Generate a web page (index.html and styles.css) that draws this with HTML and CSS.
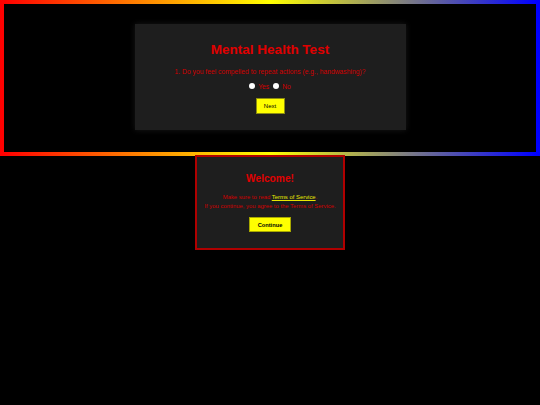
FILE: index.html
```html
<!DOCTYPE html>
<html lang="en">
<head>
<meta charset="utf-8">
<title>Mental Health Test</title>
<link rel="stylesheet" href="styles.css">
</head>
<body>
  <div class="frame">
    <div class="card">
      <h1 class="title">Mental Health Test</h1>
      <p class="question">1. Do you feel compelled to repeat actions (e.g., handwashing)?</p>
      <div class="options">
        <label class="option"><input type="radio" name="q1" class="radio"><span>Yes</span></label>
        <label class="option"><input type="radio" name="q1" class="radio"><span>No</span></label>
      </div>
      <button class="btn btn-next">Next</button>
    </div>
  </div>

  <div class="modal">
    <h2 class="modal-title">Welcome!</h2>
    <p class="modal-text">Make sure to read <a href="#" class="tos-link">Terms of Service</a>.<br>If you continue, you agree to the Terms of Service.</p>
    <button class="btn btn-continue">Continue</button>
  </div>
</body>
</html>
```

FILE: styles.css
```css
* { box-sizing: border-box; }

html, body {
  margin: 0;
  padding: 0;
  background: #000;
  font-family: "Liberation Sans", Arial, sans-serif;
  color: #e00000;
}

.frame {
  height: 156px;
  padding: 20px 0 0;
  border: 4px solid;
  border-image: linear-gradient(to right, #ff0000, #ffff00, #0000ff) 1;
}

.card {
  width: 271px;
  margin: 0 auto;
  padding: 11px 11px 16px;
  background: #1e1e1e;
  box-shadow: 0 0 6px rgba(40, 40, 40, 0.6);
  text-align: center;
  display: flex;
  flex-direction: column;
  align-items: center;
}

.title {
  margin: 7px 0 0;
  font-size: 13.5px;
  line-height: 16px;
  font-weight: bold;
  color: #e00000;
}

.question {
  margin: 10px 0 0;
  font-size: 6.75px;
  line-height: 8px;
  color: #d00000;
}

.options {
  margin-top: 5px;
  height: 10px;
  display: flex;
  align-items: center;
  gap: 4px;
}

.option {
  display: flex;
  align-items: center;
  gap: 3px;
  font-size: 6.75px;
  color: #d00000;
}

.radio {
  appearance: none;
  -webkit-appearance: none;
  margin: 0;
  width: 6px;
  height: 6px;
  border-radius: 50%;
  background: #fff;
}

.btn {
  background: #ffff00;
  color: #000;
  font-family: "Liberation Sans", Arial, sans-serif;
  padding: 0;
  cursor: pointer;
}

.btn-next {
  margin-top: 7px;
  width: 29px;
  height: 16px;
  border: 1px solid #8c8c10;
  font-size: 6px;
}

.modal {
  position: fixed;
  inset: 0;
  margin: auto;
  width: 150px;
  height: 95px;
  padding: 10px 10px 0;
  background: #1e1e1e;
  border: 2px solid #b00000;
  text-align: center;
  display: flex;
  flex-direction: column;
  align-items: center;
}

.modal-title {
  margin: 6px 0 0;
  font-size: 10.2px;
  line-height: 12px;
  font-weight: bold;
  color: #e00000;
}

.modal-text {
  margin: 7.5px 0 0;
  font-size: 5.9px;
  line-height: 9px;
  color: #d00000;
  white-space: nowrap;
}

.tos-link {
  color: #e8e800;
  text-decoration: underline;
}

.btn-continue {
  margin-top: 6.5px;
  width: 42px;
  height: 15px;
  border: 1px solid #a8a800;
  font-size: 5.7px;
  font-weight: bold;
}
```
